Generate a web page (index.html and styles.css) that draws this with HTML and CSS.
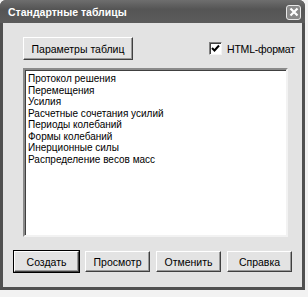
FILE: index.html
```html
<!DOCTYPE html>
<html lang="ru">
<head>
<meta charset="UTF-8">
<title>Стандартные таблицы</title>
<link rel="stylesheet" href="styles.css">
</head>
<body>
<div class="window">
    <div class="titlebar">
        <span class="title">Стандартные таблицы</span>
        <span class="close">
            <svg width="10" height="10" viewBox="0 0 10 10">
                <path d="M1.5 1.5 L8.5 8.5 M8.5 1.5 L1.5 8.5" stroke="#fff" stroke-width="2.2"/>
            </svg>
        </span>
    </div>
    <div class="client">
        <div class="top-row">
            <button class="btn params">Параметры таблиц</button>
            <label class="check">
                <span class="box">
                    <svg width="9" height="9" viewBox="0 0 9 9">
                        <path d="M1 4 L3.5 6.5 L8 1.5" stroke="#000" stroke-width="2" fill="none"/>
                    </svg>
                </span>
                HTML-формат
            </label>
        </div>
        <div class="list">
            <div class="item">Протокол решения</div>
            <div class="item">Перемещения</div>
            <div class="item">Усилия</div>
            <div class="item">Расчетные сочетания усилий</div>
            <div class="item">Периоды колебаний</div>
            <div class="item">Формы колебаний</div>
            <div class="item">Инерционные силы</div>
            <div class="item">Распределение весов масс</div>
        </div>
        <div class="buttons">
            <button class="btn default">Создать</button>
            <button class="btn">Просмотр</button>
            <button class="btn">Отменить</button>
            <button class="btn">Справка</button>
        </div>
    </div>
</div>
</body>
</html>
```

FILE: styles.css
```css
body {
    margin: 0;
    padding: 0;
    background: #f2f2f2;
    font-family: "Liberation Sans", Arial, sans-serif;
    font-size: 10px;
    color: #000;
}
.window {
    width: 305px;
    height: 290px;
    display: flex;
    flex-direction: column;
    background: #505050;
    border-radius: 6px 6px 0 0;
    overflow: hidden;
}
.titlebar {
    height: 23px;
    display: flex;
    align-items: center;
    justify-content: space-between;
    padding: 0 4px 0 8px;
    background: linear-gradient(#6e6e6e, #555 40%, #5c5c5c);
    flex-shrink: 0;
}
.title {
    color: #fff;
    font-weight: bold;
    font-size: 10.5px;
}
.close {
    width: 13px;
    height: 13px;
    display: flex;
    align-items: center;
    justify-content: center;
    border: 1px solid #e8e8e8;
    border-radius: 3px;
    background: #8a8a8a;
    margin-top: 1px;
}
.client {
    flex: 1;
    margin: 0 3px 3px 3px;
    background: #e3e3e3;
    padding: 14px 0 0 0;
}
.top-row {
    display: flex;
    align-items: center;
    margin-left: 20px;
    height: 23px;
}
.btn {
    font-family: "Liberation Sans", Arial, sans-serif;
    font-size: 10.5px;
    color: #000;
    background: #e3e3e3;
    border: 1px solid;
    border-color: #fff #404040 #404040 #fff;
    box-shadow: inset -1px -1px 0 #9a9a9a;
    padding: 0;
    height: 21px;
}
.params {
    width: 110px;
    height: 23px;
}
.check {
    display: flex;
    align-items: center;
    margin-left: 76px;
    gap: 5px;
    font-size: 10.5px;
    letter-spacing: -0.2px;
    white-space: nowrap;
}
.box {
    width: 11px;
    height: 11px;
    background: #fff;
    border: 1px solid;
    border-color: #808080 #f4f4f4 #f4f4f4 #808080;
    box-shadow: inset 1px 1px 0 #404040;
    display: flex;
    align-items: center;
    justify-content: center;
}
.list {
    box-sizing: border-box;
    margin: 8px 0 0 20px;
    width: 265px;
    height: 169px;
    background: #fff;
    border: 2px solid;
    border-color: #8a8a8a #f2f2f2 #f2f2f2 #8a8a8a;
    box-shadow: inset 1px 1px 0 #404040;
    padding: 3px 3px;
}
.item {
    line-height: 11.5px;
    height: 11.5px;
    white-space: nowrap;
}
.buttons {
    display: flex;
    gap: 6px;
    margin: 14px 0 0 11px;
}
.buttons .btn {
    width: 65px;
}
.default {
    outline: 1px solid #000;
}
```
